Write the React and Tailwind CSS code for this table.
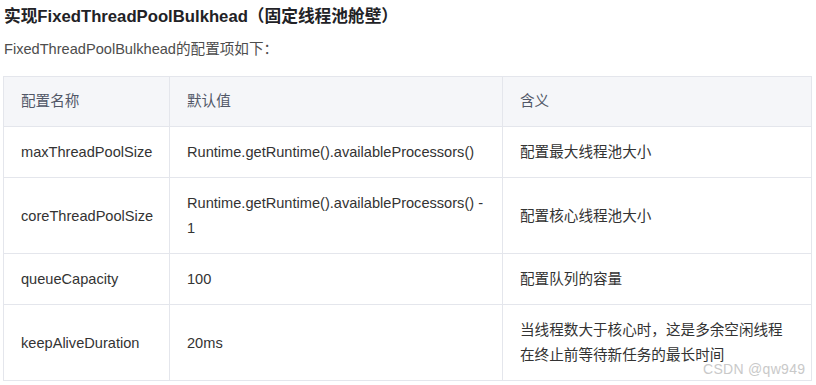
import React from "react";

const rows = [
    { name: "maxThreadPoolSize", value: "Runtime.getRuntime().availableProcessors()", desc: "配置最大线程池大小" },
    { name: "coreThreadPoolSize", value: "Runtime.getRuntime().availableProcessors() - 1", desc: "配置核心线程池大小" },
    { name: "queueCapacity", value: "100", desc: "配置队列的容量" },
    { name: "keepAliveDuration", value: "20ms", desc: "当线程数大于核心时，这是多余空闲线程在终止前等待新任务的最长时间" },
];

const font = { fontFamily: '"Liberation Sans", Arial, "Noto Sans CJK SC", sans-serif' };

export default function App() {
    return (
        <div className="relative w-[816px] h-[385px] bg-white overflow-hidden" style={font}>
            {/* Heading */}
            <h3 className="pl-1 pt-[6px] text-[16.7px] leading-[22px] font-bold text-[#222226]">
                实现FixedThreadPoolBulkhead（固定线程池舱壁）
            </h3>
            <p className="pl-1 mt-[10px] text-[14.6px] leading-[22px] text-[#4d4d4d]">
                FixedThreadPoolBulkhead的配置项如下：
            </p>

            {/* Config table */}
            <table className="ml-[3px] mt-[16px] w-[808px] table-fixed border-collapse text-[14.6px] leading-[25px]">
                <colgroup>
                    <col className="w-[166px]" />
                    <col className="w-[333px]" />
                    <col className="w-[309px]" />
                </colgroup>
                <thead>
                    <tr className="bg-[#f5f6f9] text-[#515767]">
                        <th className="border border-[#e4e6ec] px-[17px] py-3 text-left font-normal">配置名称</th>
                        <th className="border border-[#e4e6ec] px-[17px] py-3 text-left font-normal">默认值</th>
                        <th className="border border-[#e4e6ec] px-[17px] py-3 text-left font-normal">含义</th>
                    </tr>
                </thead>
                <tbody className="text-[#333333]">
                    {rows.map((r) => (
                        <tr key={r.name}>
                            <td className="border border-[#e4e6ec] px-[17px] pt-[13px] pb-3">{r.name}</td>
                            <td className="border border-[#e4e6ec] px-[17px] pt-[13px] pb-3">{r.value}</td>
                            <td className="border border-[#e4e6ec] px-[17px] pt-[13px] pb-3">{r.desc}</td>
                        </tr>
                    ))}
                </tbody>
            </table>

            {/* Watermark */}
            <div className="absolute left-[703px] top-[361px] text-[14px] leading-[16px] text-[#c9c9c9] tracking-[0.3px]">
                CSDN @qw949
            </div>
        </div>
    );
}
